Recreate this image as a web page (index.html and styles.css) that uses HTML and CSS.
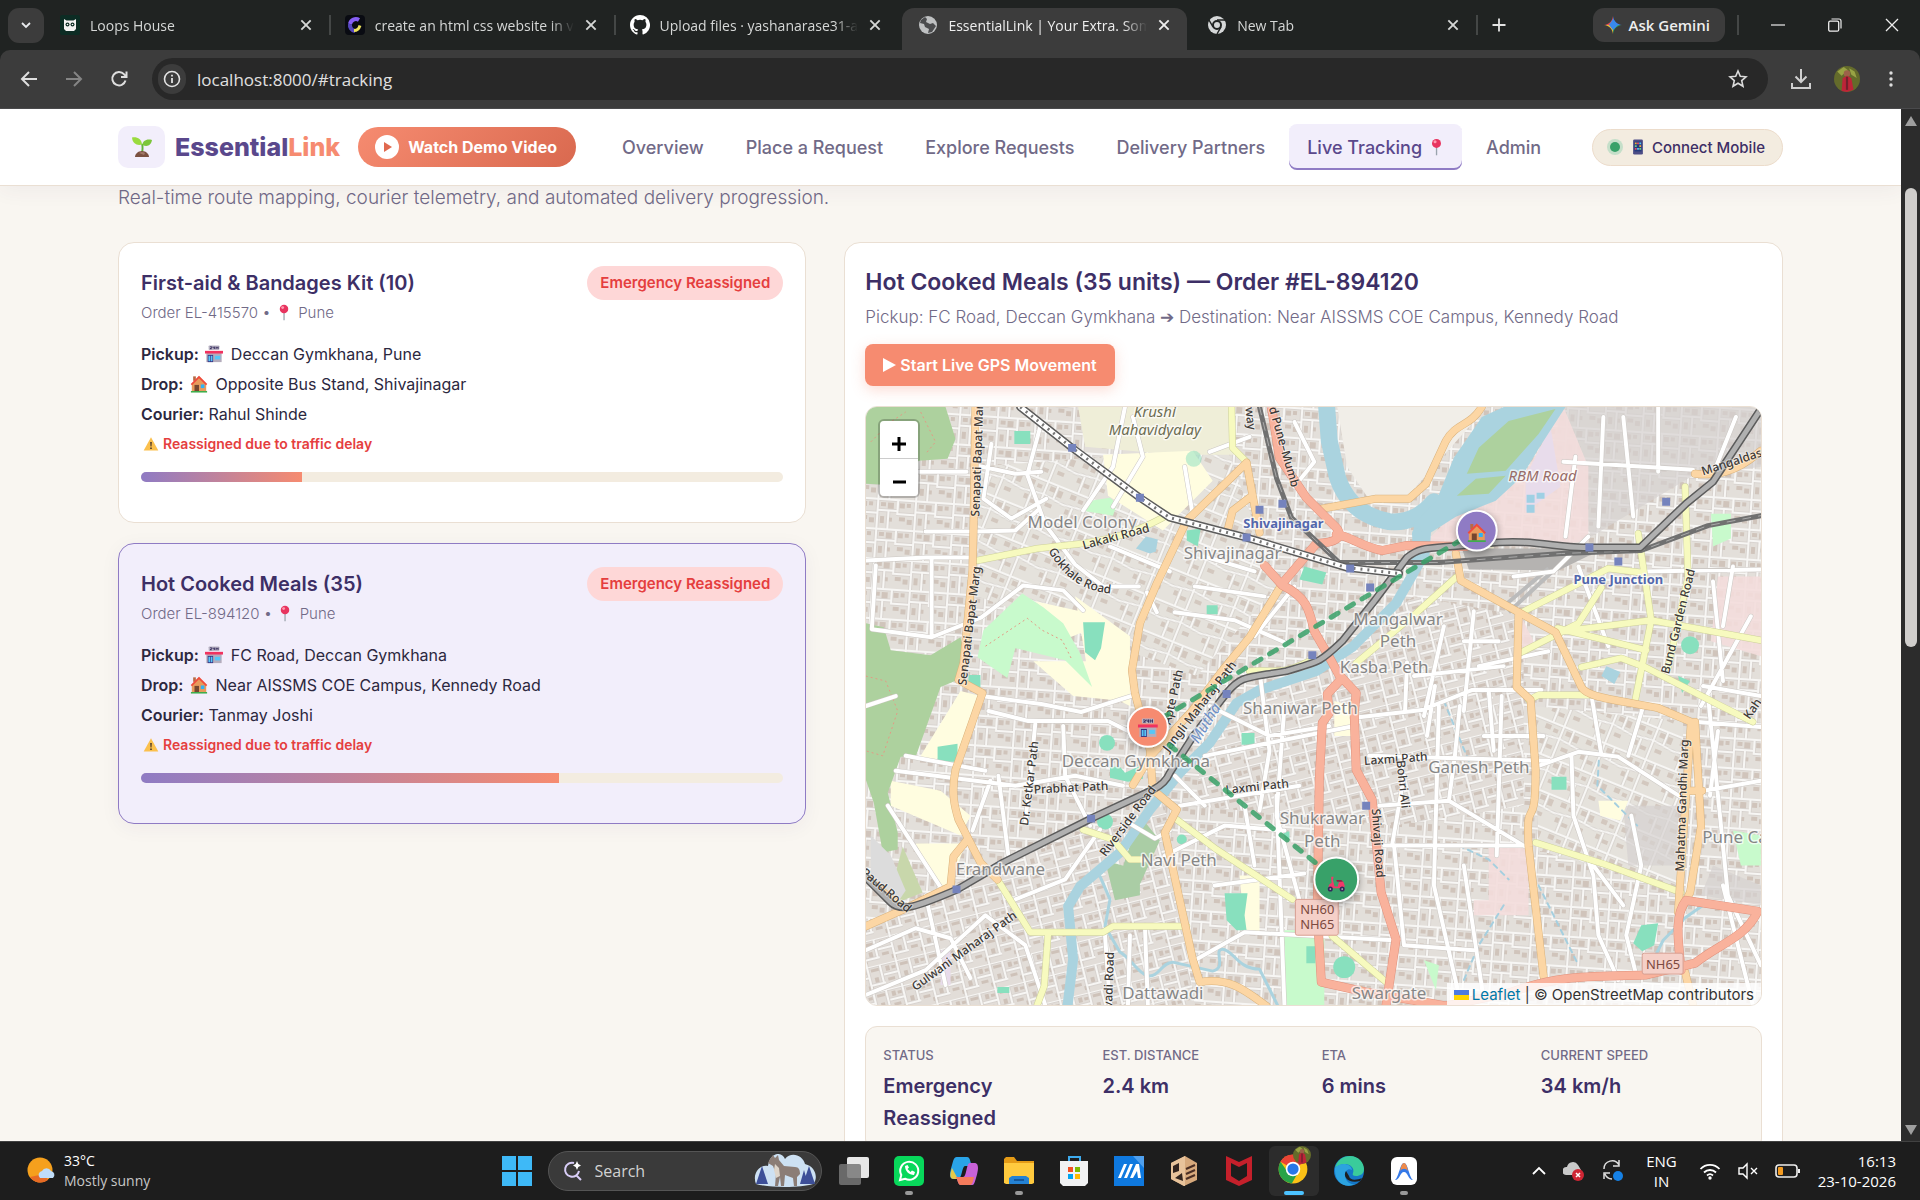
FILE: index.html
```html
<!DOCTYPE html>
<html lang="en">
<head>
<meta charset="utf-8">
<meta name="viewport" content="width=device-width, initial-scale=1">
<title>EssentialLink | Your Extra. Someone's Essential.</title>
<link rel="stylesheet" href="styles.css">
</head>
<body>
<svg class="sprite" aria-hidden="true">
  <symbol id="i-x" viewBox="0 0 12 12"><path d="M2 2l8 8M10 2l-8 8" stroke="currentColor" stroke-width="1.6" fill="none"/></symbol>
  <symbol id="i-pin" viewBox="0 0 16 20"><path d="M7.3 9h1.5v10.2h-1.5z" fill="#9aa3ad"/><circle cx="8" cy="6" r="5" fill="#e8345f"/><circle cx="6.4" cy="4.2" r="1.7" fill="#ff9bb0"/></symbol>
  <symbol id="i-store" viewBox="0 0 20 20"><rect x="4" y="0.5" width="12" height="5" rx="1" fill="#b9b4c4"/><path d="M5.500 2h2v1.200l-2 1h2M9 1.800v1.400h1.600M10.600 1.800v2.600M12.300 1.800v2.600M14.600 1.800v2.600M12.300 3h2.300" stroke="#33295a" stroke-width=".9" fill="none"/><rect x="1.500" y="9" width="17" height="10" fill="#b4acbc"/><path d="M0 6.500h20v3H0z" fill="#f1325f"/><rect x="3" y="11" width="6" height="8" fill="#3a2b7c"/><path d="M3.800 12h1.900v6H3.800zM6.400 12h1.900v6H6.400z" fill="#55c6f7"/><rect x="11" y="12" width="6" height="4" fill="#55c6f7"/></symbol>
  <symbol id="i-house" viewBox="0 0 20 20"><path d="M3.500 1.500h3v5h-3z" fill="#b96a45"/><path d="M10 1.500L2 10v8h16v-8z" fill="#e89a5b"/><path d="M10 .8L.8 10l1.400 1.400L10 3.700l7.800 7.700 1.400-1.400z" fill="#ef4b3c"/><path d="M5 11h5v7H5z" fill="#75462f"/><path d="M12 10.500h4v4h-4z" fill="#30b2f4"/><path d="M1 17.800h18v1.700H1z" fill="#3fae4c"/></symbol>
  <symbol id="i-warn" viewBox="0 0 16 16"><path d="M8 1.200L15.300 14.500H.7z" fill="#fbc04d"/><path d="M7.200 6h1.600l-.3 4.500h-1zM7.200 11.500h1.600V13H7.200z" fill="#4a3527"/></symbol>
  <symbol id="i-sprout" viewBox="0 0 24 24"><path d="M11 18c.8-4 .7-6 .2-9l2-.2c.5 3.600.4 6-.1 9.200z" fill="#62b33c"/><path d="M12 9.500C7 11 2.500 8.500 2 2.500 7 1.500 11.500 4 12 9.500z" fill="#9adb3e"/><path d="M12.500 10c0-4 4-6.500 9.500-5-.8 5-4.500 7.500-9.500 5z" fill="#7cc63a"/><path d="M5 22c0-3 3-6 7-6s7 3 7 6z" fill="#7b5141"/><path d="M9 18c2-1.500 4-1.500 6 0l-1 2z" fill="#a27968"/></symbol>
  <symbol id="i-phone" viewBox="0 0 12 18"><rect x=".5" y=".5" width="11" height="17" rx="1.500" fill="#4c4d86"/><path d="M2 3h8v11H2z" fill="#263b7d"/><path d="M2.500 4h2v2h-2zM7.500 7h2v2h-2z" fill="#f4ad3d"/><path d="M5 4h2v2H5zM2.500 10h2v2h-2z" fill="#e84b66"/><path d="M7.500 4h2v2h-2zM5 10h2v2H5z" fill="#5bc5f2"/><path d="M2.500 7h2v2h-2zM7.500 10h2v2h-2z" fill="#6cd280"/></symbol>
  <symbol id="i-scooter" viewBox="0 0 24 20"><path d="M6 1.500h3L8 5l2 8h4c0-5 2-7 6-6l2 5-1 3H6l-3-1c0-3 1-4 3.500-5z" fill="#f0386a"/><path d="M12 5.500h6l2 2h-7z" fill="#8e2445"/><circle cx="5" cy="16" r="3" fill="#33295a"/><circle cx="19" cy="16" r="3" fill="#33295a"/><circle cx="5" cy="16" r="1" fill="#ccc"/><circle cx="19" cy="16" r="1" fill="#ccc"/></symbol>
  <symbol id="i-person" viewBox="0 0 24 24"><circle cx="12" cy="12" r="12" fill="#646b2b"/><path d="M3 5l6-4 4 3-6 5zM14 2l5 3 2 6-5-3z" fill="#98a344"/><circle cx="12" cy="7" r="3" fill="#9b6249"/><path d="M7 23l1-12 4-2 4 2 2 11-6 2z" fill="#bd2438"/><path d="M11 10h2v12h-2z" fill="#74202d"/></symbol>
  <symbol id="i-chrome" viewBox="0 0 24 24"><circle cx="12" cy="12" r="11.500" fill="#fbc116"/><path d="M12 12L2 6.200A11.500 11.500 0 0 1 22 6.200z" fill="#ea4335"/><path d="M12 .5A11.500 11.500 0 0 1 22 6.500H12z" fill="#ea4335"/><path d="M2 6.200A11.500 11.500 0 0 0 11 23.500l5-8.500-8.500-1z" fill="#28a347"/><circle cx="12" cy="12" r="5.800" fill="#fff"/><circle cx="12" cy="12" r="4.500" fill="#2877e8"/></symbol>
</svg>

<header class="browser">
  <div class="tabstrip">
    <button class="tab-search" aria-label="Search tabs"><svg width="12" height="12" viewBox="0 0 12 12"><path d="M2 4l4 4 4-4" stroke="#e8eaed" stroke-width="1.800" fill="none"/></svg></button>
    <nav class="tabs" aria-label="Tabs">
      <div class="tab"><svg width="20" height="20" viewBox="0 0 20 20"><rect width="20" height="20" rx="2" fill="#0c2c24"/><path d="M4 4l2.500 1.500h7L16 4v10l-2 2H6l-2-2z" fill="#f2f2f2"/><circle cx="7.500" cy="9.500" r="2" fill="#0c2c24"/><circle cx="12.500" cy="9.500" r="2" fill="#0c2c24"/><circle cx="7.500" cy="9.500" r=".8" fill="#fff"/><circle cx="12.500" cy="9.500" r=".8" fill="#fff"/></svg><span class="tab-title">Loops House</span><button aria-label="Close tab"><svg width="14" height="14"><use href="#i-x"/></svg></button></div>
      <div class="tab divided"><svg width="20" height="20" viewBox="0 0 20 20"><rect width="20" height="20" rx="4" fill="#090b12"/><path d="M14 5A6 6 0 0 0 5 9" stroke="#865ef5" stroke-width="4" fill="none"/><path d="M5 9a6 6 0 0 0 5 7" stroke="#5548bd" stroke-width="4" fill="none"/><path d="M9 15.500c4 0 5-2 6-5" stroke="#ede35c" stroke-width="3" fill="none"/></svg><span class="tab-title">create an html css website in v</span><button aria-label="Close tab"><svg width="14" height="14"><use href="#i-x"/></svg></button></div>
      <div class="tab divided"><svg width="20" height="20" viewBox="0 0 16 16"><path fill="#fff" d="M8 0C3.580 0 0 3.580 0 8c0 3.540 2.290 6.530 5.470 7.590.4.070.55-.17.55-.38 0-.19-.01-.82-.01-1.490-2.010.37-2.530-.49-2.690-.94-.09-.23-.48-.94-.82-1.130-.28-.15-.68-.52-.01-.53.630-.01 1.080.58 1.230.82.720 1.210 1.870.87 2.330.66.070-.52.280-.87.510-1.070-1.780-.2-3.640-.89-3.640-3.950 0-.87.310-1.590.82-2.150-.08-.2-.36-1.020.08-2.120 0 0 .67-.21 2.200.82a7.600 7.600 0 0 1 4 0c1.530-1.040 2.200-.82 2.200-.82.440 1.100.16 1.920.08 2.120.51.560.82 1.270.82 2.150 0 3.070-1.870 3.750-3.650 3.950.29.250.54.730.54 1.480 0 1.070-.01 1.930-.01 2.200 0 .21.150.46.550.38A8 8 0 0 0 8 0z"/></svg><span class="tab-title">Upload files · yashanarase31-a</span><button aria-label="Close tab"><svg width="14" height="14"><use href="#i-x"/></svg></button></div>
      <div class="tab active"><svg width="20" height="20" viewBox="0 0 20 20"><circle cx="10" cy="10" r="9" fill="#bfc1c2"/><path d="M3 5l4-3 2 2-1 3 4 2 3-1 3 3-4 6-4 1 1-4-4-2-1-3-4-1z" fill="#4b4c4e"/></svg><span class="tab-title">EssentialLink | Your Extra. Som</span><button aria-label="Close tab"><svg width="14" height="14"><use href="#i-x"/></svg></button></div>
      <div class="tab"><svg width="20" height="20" viewBox="0 0 20 20"><circle cx="10" cy="10" r="9" fill="#d5d7d8"/><circle cx="10" cy="10" r="4" fill="#d5d7d8" stroke="#202322" stroke-width="2"/><path d="M10 5h8M6 12L2 5M14 12l-4 7" stroke="#202322" stroke-width="1.500"/></svg><span class="tab-title">New Tab</span><button aria-label="Close tab"><svg width="14" height="14"><use href="#i-x"/></svg></button></div>
    </nav>
    <button class="new-tab" aria-label="New tab"><svg width="16" height="16" viewBox="0 0 16 16"><path d="M8 1.500v13M1.500 8h13" stroke="#e3e3e3" stroke-width="1.800"/></svg></button>
    <button class="gemini"><svg width="18" height="18" viewBox="0 0 18 18"><path d="M9 0c.5 5 4 8.500 9 9H9z" fill="#447df2"/><path d="M9 0C8.500 5 5 8.500 0 9h9z" fill="#eb4a53"/><path d="M0 9c5 .5 8.500 4 9 9V9z" fill="#eebc35"/><path d="M9 18c.5-5 4-8.500 9-9H9z" fill="#2da567"/><path d="M9 3l5 6-5 5-4-5z" fill="#3889ec"/></svg>Ask Gemini</button>
    <div class="window-controls">
      <button aria-label="Minimize"><svg width="14" height="14" viewBox="0 0 14 14"><path d="M0 7h14" stroke="#ddd" stroke-width="1.300"/></svg></button>
      <button aria-label="Restore"><svg width="14" height="14" viewBox="0 0 14 14"><rect x=".7" y="3.200" width="10" height="10" rx="1.500" fill="none" stroke="#eee" stroke-width="1.300"/><path d="M3.500 1h7.500a2 2 0 0 1 2 2v7.500" fill="none" stroke="#eee" stroke-width="1.200"/></svg></button>
      <button aria-label="Close window"><svg width="14" height="14" viewBox="0 0 14 14"><path d="M1 1l12 12M13 1L1 13" stroke="#eee" stroke-width="1.300"/></svg></button>
    </div>
  </div>
  <div class="toolbar">
    <button aria-label="Back"><svg width="18" height="18" viewBox="0 0 18 18"><path d="M17 9H2.500M9 2L2 9l7 7" stroke="#dedede" stroke-width="2" fill="none"/></svg></button>
    <button aria-label="Forward"><svg width="18" height="18" viewBox="0 0 18 18"><path d="M1 9h14.500M9 2l7 7-7 7" stroke="#858585" stroke-width="2" fill="none"/></svg></button>
    <button aria-label="Reload"><svg width="18" height="18" viewBox="0 0 18 18"><path d="M15.500 10.500A6.700 6.700 0 1 1 14 4.200L16 6" stroke="#dedede" stroke-width="2" fill="none"/><path d="M16.500 1.500V7H11" stroke="#dedede" stroke-width="2" fill="none"/></svg></button>
    <div class="omnibox">
      <button class="site-info" aria-label="Site information"><svg width="18" height="18" viewBox="0 0 18 18"><circle cx="9" cy="9" r="7.500" stroke="#e3e3e3" stroke-width="1.600" fill="none"/><path d="M9 8v5M9 4.800v1.800" stroke="#e3e3e3" stroke-width="1.800"/></svg></button>
      <input type="text" aria-label="Address" value="localhost:8000/#tracking">
      <button aria-label="Bookmark"><svg width="20" height="20" viewBox="0 0 20 20"><path d="M10 2l2.300 5.300 5.700.5-4.300 3.800 1.300 5.700-5-3-5 3 1.300-5.700L2 7.800l5.700-.5z" stroke="#dcdcdc" stroke-width="1.600" fill="none"/></svg></button>
    </div>
    <div class="toolbar-actions">
      <button aria-label="Downloads"><svg width="22" height="22" viewBox="0 0 22 22"><path d="M11 1v13M5.500 8.500L11 14l5.500-5.500M2 15v5h18v-5" stroke="#d0d0d0" stroke-width="2" fill="none"/></svg></button>
      <button aria-label="Profile"><svg width="26" height="26"><use href="#i-person"/></svg></button>
      <button aria-label="Menu"><svg width="18" height="18" viewBox="0 0 18 18" fill="#dedede"><circle cx="9" cy="3" r="1.700"/><circle cx="9" cy="9" r="1.700"/><circle cx="9" cy="15" r="1.700"/></svg></button>
    </div>
  </div>
</header>

<div class="viewport">
  <div class="page">
    <div class="site-header">
      <a class="brand" href="#home"><span class="brand-icon"><svg width="24" height="24"><use href="#i-sprout"/></svg></span><span class="wordmark">Essential<span>Link</span></span></a>
      <button class="demo"><svg width="24" height="24" viewBox="0 0 24 24"><circle cx="12" cy="12" r="12" fill="#fff"/><path d="M9 7l8 5-8 5z" fill="#e0694f"/></svg>Watch Demo Video</button>
      <nav class="site-nav" aria-label="Main">
        <a href="#overview">Overview</a><a href="#request">Place a Request</a><a href="#explore">Explore Requests</a><a href="#partners">Delivery Partners</a><a class="current" href="#tracking">Live Tracking <svg width="15" height="18"><use href="#i-pin"/></svg></a><a href="#admin">Admin</a>
      </nav>
      <button class="connect"><i></i><svg width="12" height="16"><use href="#i-phone"/></svg>Connect Mobile</button>
    </div>

    <main class="content">
      <p class="lead">Real-time route mapping, courier telemetry, and automated delivery progression.</p>
      <div class="columns">
        <section class="orders" aria-label="Orders">
          <article class="order">
            <div class="order-head"><div><h3>First-aid &amp; Bandages Kit (10)</h3><p class="meta">Order EL-415570 • <svg width="14" height="17"><use href="#i-pin"/></svg> Pune</p></div><span class="badge">Emergency Reassigned</span></div>
            <ul class="details">
              <li><b>Pickup:</b> <svg width="18" height="18"><use href="#i-store"/></svg> Deccan Gymkhana, Pune</li>
              <li><b>Drop:</b> <svg width="18" height="18"><use href="#i-house"/></svg> Opposite Bus Stand, Shivajinagar</li>
              <li><b>Courier:</b> Rahul Shinde</li>
              <li class="warning"><svg width="16" height="16"><use href="#i-warn"/></svg>Reassigned due to traffic delay</li>
            </ul>
            <div class="progress"><div style="width:25%"></div></div>
          </article>
          <article class="order selected">
            <div class="order-head"><div><h3>Hot Cooked Meals (35)</h3><p class="meta">Order EL-894120 • <svg width="14" height="17"><use href="#i-pin"/></svg> Pune</p></div><span class="badge">Emergency Reassigned</span></div>
            <ul class="details">
              <li><b>Pickup:</b> <svg width="18" height="18"><use href="#i-store"/></svg> FC Road, Deccan Gymkhana</li>
              <li><b>Drop:</b> <svg width="18" height="18"><use href="#i-house"/></svg> Near AISSMS COE Campus, Kennedy Road</li>
              <li><b>Courier:</b> Tanmay Joshi</li>
              <li class="warning"><svg width="16" height="16"><use href="#i-warn"/></svg>Reassigned due to traffic delay</li>
            </ul>
            <div class="progress"><div style="width:65%"></div></div>
          </article>
        </section>

        <section class="tracker" aria-label="Live order tracking">
          <h2>Hot Cooked Meals (35 units) — Order #EL-894120</h2>
          <p class="route">Pickup: FC Road, Deccan Gymkhana ➔ Destination: Near AISSMS COE Campus, Kennedy Road</p>
          <button class="start"><svg width="13" height="14" viewBox="0 0 13 14"><path d="M0 0l13 7-13 7z" fill="#fff"/></svg>Start Live GPS Movement</button>

          <div class="map">
            <svg class="tiles" viewBox="0 0 898 600" preserveAspectRatio="xMidYMid slice" role="img" aria-label="Map of Pune">
              <defs>
                <pattern id="p-a" width="38" height="30" patternUnits="userSpaceOnUse" patternTransform="rotate(4)"><rect width="38" height="30" fill="#e3dfda"/><path d="M3 4h5v5H3zM10 4h4v4h-4zM22 4h5v4h-5zM29 4h6v6h-6zM3 18h6v4H3zM11 20h5v5h-5zM22 18h4v7h-4zM29 19h5v4h-5z" fill="#d0c4bb"/><path d="M0 1h38M0 15h20M18 12h20M19 0v30M1 0v15M30 12v18" class="lane-case"/><path d="M0 1h38M0 15h20M18 12h20M19 0v30M1 0v15M30 12v18" class="lane"/></pattern>
                <pattern id="p-b" width="30" height="26" patternUnits="userSpaceOnUse" patternTransform="rotate(-14)"><rect width="30" height="26" fill="#e2ddd8"/><path d="M3 3h4v5H3zM9 4h4v3H9zM18 3h8v3h-8zM3 15h7v3H3zM20 12h4v5h-4zM12 19h5v4h-5z" fill="#cec2b9"/><path d="M0 0h30M0 11h16M15 0v26M15 19h15M28 0v19" class="lane-case"/><path d="M0 0h30M0 11h16M15 0v26M15 19h15M28 0v19" class="lane"/></pattern>
                <pattern id="p-c" width="44" height="34" patternUnits="userSpaceOnUse" patternTransform="rotate(22)"><rect width="44" height="34" fill="#e5e2dc"/><path d="M4 4h6v5H4zM13 6h5v4h-5zM26 4h6v5h-6zM35 5h5v7h-5zM4 20h4v5H4zM12 23h6v4h-6zM27 21h7v4h-7z" fill="#d3c8bf"/><path d="M0 1h44M0 17l22-3 22 3M22 0v34M10 17v17M33 1v14" class="lane-case"/><path d="M0 1h44M0 17l22-3 22 3M22 0v34M10 17v17M33 1v14" class="lane"/></pattern>
                <g id="minor">
                  <path d="M23 65h78M112 59l38 8 26-2M126 37l-8 55 28 20 35-20M176 16l-14 52 18 50 30 40 28 22h36M60 125h50l40-1 22-20M0 154l60-3h48M66 153v78l-60-8 4-64M66 231l50-20 42-32 40 5 20 20M218 104l30-44 12-60M268 10l10 40-30 50M245 140l60 25M310 206l60 8 50 22M292 206l-10-20M0 300l30-10M116 290l60 8 40 8 50-16M123 305l40 10h80l40 20M30 365l120 15 60-10 48 10M170 318l-10 100M198 320l2 50 25 50M133 370l10 80M125 375l-18 50M40 350l80 15M150 494l50-20 35-50M22 400l55 85M60 490l20 90M0 545l50-22 35 10 20 40M0 590l60-25 60-55 40 30 20 60M240 530l5 70M265 530l-2 70M280 520l3 80M300 450l60-30 60 5M265 418l25 15 15-8M310 370l30 30M315 400l120-20M340 350l150-30M345 300l60 30 60-10M395 265l10 80-10 60M420 300l-8 110 30 110M380 400l10 60M350 480l90-12M330 555l50-28 150 8M412 390l8 210M530 440l10 100 70 5"/>
                  <path d="M488 312l70-8 50-20h70M543 256l-2 50M563 330l8-50M596 300l-5 50-6 45M575 300l-5 180 25 110M520 440h145M515 400l70-5 80 48M505 350l180 5M540 370l-12 70M600 460l20 135M638 290l-5 160M615 260l70-15M625 285l5 60M675 360l40-14 40 5 70 45M708 350l2 60 20 60 5 60 20 45M768 410l10 50-15 70 10 40M730 460l30 40M845 290l10 100 10 100 33 70M835 316l63 5M841 385l57-10M860 480l30 120M840 280l58 10M780 165l118-2M650 170l40-5 35-35M740 10l-5 110M700 55l130 8M760 10l10 100M795 0v65M853 60l20-50M712 50l-10 80M600 235l35 0M580 220l-20 90M610 205l-10 100M640 260l-90 10M620 330h60M855 325l-8 65M728 289l10 60M780 300l-15 50M715 160l30 80M850 175l10 100M870 160l-10 60M888 210l-50 90M345 45l40-15M320 60l10 60M430 15l20 40-20 25M340 150l50 15M330 180l70 10M430 180l-40 50"/>
                </g>
                <g id="trunk"><path d="M407 0l8 51 27 40 30 30c8 10 0 15-20 16l-34 40M472 128c15 2 25 12 46 16l24-5 60 1M400 159l18 20c25 12 27 25 32 46l15 26 12 22-14 15 2 19-7 10-3 57-2 133 4 70 45 10 80 14 66-14c50-18 80-15 134-17l50-12c25-20 50-25 63-52l-72-11c-12 15-8 40-5 70M477 271l15 16-2 20 2 57 16 30 9 93 15 47-10 66"/></g>
                <g id="secondary"><path d="M110 0l-2 124-1 40-9 93-5 17 24 13-27 77c-5 25 0 40 3 50l22 43 17 17M102 434l-14 17-3 30-47 23L0 521M0 472l38 32M382 56l-60 58-30 63-17 40-8 47 3 23 15 57 3 40 24 20-12 23 28 127 7 23c30-5 45 8 67 24M382 56l13 70M385 91l-17 13-5 20M418 177l-33 54-27 33-30 40-43 47-17 28M618 0c-12 20-25 15-36 34l-20 43-17 15h-33l-54 10M592 147l5 27 58 32 37 20 26 55c5 10 30 12 77 21l33 14-13 191M655 206l-2 75 14 13 5 70c0 70-10 20-7 77l15 130M832 316l6 105-11 66-10 20M832 67c20 2 40 0 66-23M822 567l8 33M822 385h17"/></g>
                <g id="tertiary"><path d="M112 154l60-12 46-5c30-5 50-10 80-26M367 0l1 41 14 14M132 474l33 53h73l10-6h74M183 527l-4 54-7 19M312 414l40 30 76 50M468 531l54 46M218 424l30 10 17 20h13M672 437l70 22 76 28M665 294l10-5h53M658 206l87-44 33 4M775 127l13 87-16 80M692 226l96-12 110 20M738 181l-23 36-57 29M694 222l89 22M718 261l40-9 24 9 80 41 28 14M822 80l3 91-20 90M492 257l60-50 40-36M385 265c25-2 30 5 60-10"/></g>
                <path id="metro" d="M0 472l25 25c10 10 25 5 67-13l46-27 90-45 60-28c10-5 15-12 17-17l23-36 34-44c15-18 20-15 60-22 35-10 35-10 56-30l32-40 33-44c15-12 20-8 77-14 50-5 70 4 100 4h57l46-44 27-22 50-76"/>
                <path id="metro-w" d="M155 0l52 41 68 50 30 20 77 20 100 30 53 6"/>
                <path id="rail" d="M395 0l17 71 15 40 48 45h100l123-9 80-3 67-25 53-10"/>
              </defs>
              <rect width="898" height="600" fill="url(#p-a)"/>
              <path d="M112 60l250-20 50 140-80 90-110-40-110-40z" fill="url(#p-c)"/>
              <path d="M98 260l190 10 20 100-180 90-38-60z" fill="url(#p-a)"/>
              <path d="M60 490l150-60 90-30 30 200H0v-80z" fill="url(#p-b)"/>
              <path d="M340 330l130-80 80-60 110 20v190l-130 20-200-20z" fill="url(#p-b)"/>
              <path d="M670 300l150 15v170l-145-40z" fill="url(#p-c)"/>
              <path d="M700 0h198v60l-70 10-100 60-40-90zM760 400h55v60h-50zM850 460l48 20v20l-60-10z" fill="#d5d2d0" fill-opacity=".7"/>
              <path d="M473 0h150l-80 90-40 0-20-30z" fill="#f1eee8"/>
              <path d="M213 0h152l5 48-60 0-90-8z" fill="#efeed8"/>
              <path d="M238 48l90-4 20 30-50 50-55-35zM170 195l45 10 10 18-20 8zM210 190l55 40v70l-40-20zM168 255h90v40l-50-5zM95 285l20 5-18 60-45 5zM25 375l50 10 30 25-10 20-70-30zM50 438h50l-20 55zM375 470h20v60l-15-5zM735 395h30l-8 20-20-5zM470 295l20 5v30h-20zM600 120h30v30h-30z" fill="#fffde0"/>
              <path d="M560 137l35-35 35-8 30-26 40-68 25 60v75l-60 5zM625 440h40v70h-55v-15h15zM855 170h43v80l-50-15zM655 205l15 30-10 20z" fill="#f3dddb" fill-opacity=".9"/>
              <path d="M662 70l25-50 10 60-35 25zM75 545h10v35h-10z" fill="#e8dceb"/>
              <path d="M0 0h80l10 32-8 20-29 2-18 25-35-2zM0 217l18 4 7 23 40 5 30-18 5 23-8 20-17 7-25 70-15 0-13 36 10 40v17l-15 3-9-50-8-23z" fill="#add19e"/>
              <path d="M37 441l20 46-22 9-6-25z" fill="#c8d7ab"/><path d="M5 430l20 20 15 35-10 15-25-22z" fill="#dcdcdc"/>
              <path d="M112 251l6-27 39-37 21 14 20 16 17 30 12 34-27-27-50-12-8 30zM218 104l7-10 20-3 7 6-4 12zM420 525h40v75h-40zM560 555l15 5-3 25zM870 425l28 5v30h-20zM848 107l20 0v25l-18 8z" fill="#c8facc"/>
              <path d="M275 410l20 25-25 55-15-20zM240 455l35 10v25l-25 5z" fill="#aacda5"/>
              <g class="trails"><path d="M5 35l20-20 15-10M55 5l15 30-10 12M0 270l20 5 12 30-15 45-17-5M120 240l30-20 12-8 15 12 20 10 10 20"/></g>
              <g class="sport"><path d="M149 24h16v13h-16zM218 216h22l-4 26-6 12-10-8zM72 341l20-3v18H72zM103 269h12v12h-12zM377 327h13v12h-13zM245 361h10l5 6 18-8v14l-15 3-18-4zM360 488h23l-3 22 2 15h-10l-10-10zM442 541h9v17h-9zM688 371h15v13h-15zM778 520l17-2-4 22-12 6-9-8zM322 124l14-2-3 18-11-6zM132 582h12v6h-12zM417 426h8v8h-8zM342 199h11v9h-11zM440 160l22 6-4 12-23-5zM815 270l12 5-8 12z"/><circle cx="242" cy="337" r="8"/><circle cx="240" cy="416" r="8"/><circle cx="317" cy="434" r="5"/><circle cx="480" cy="562" r="11"/><circle cx="827" cy="239" r="9"/><circle cx="329" cy="52" r="8" opacity=".5"/></g>
              <g class="water">
                <path d="M462-5l3 39 8 36c8 25 25 40 52 45 20 2 35-8 45-20" class="river-n"/>
                <path d="M618 10L640 0h62l-24 37-20 33-26 24-40 16-25 16-2 31h-18l3-40 22-22 18-44 22-32z" fill="#aad3df"/>
                <path d="M553 127l2 30-23 40-44 44-36 24-57 19-23 13-27 40-30 30-30 37-30 43-40 34-12 20 5 53-6 50" class="river"/>
                <path d="M235 471l10 23-5 27 15 26c10 5 20 24 30 24s12-14 23-14l40 9c15-3 0-22 10-22s15 20 37 20l20 40M820 514l20-14 30-3M790 555l10-20 20-20" class="stream"/>
                <path d="M285 147l-14-5 10-12 12 3-2 12zM738 270l5-10 14 6-6 12z" class="pond"/>
                <path d="M663 88h8v8h-8zM673 86h8v6h-8zM663 98h8v8h-8z" fill="#9fd0e4"/>
                <path d="M595 440l30 14 20 20M640 500l-25 40-15 35M675 480l20 40 20 40M580 295l25 60M736 345l-2 35 40 40" class="drain"/>
              </g>
              <path d="M603 67l12-26 30-27 47-12-17 25-33 37zM593 89l19-17 30-3-17 18z" fill="#add19e"/>
              <path d="M598 142h142l-45 22-90-1z" fill="#b5b3b1"/><path d="M645 206l45-42M640 200l45-38" stroke="#bbb" stroke-width="4" fill="none"/>
              <use href="#minor" class="minor-case"/><use href="#minor" class="minor"/>
              <use href="#tertiary" class="ter-case"/><use href="#tertiary" class="ter"/>
              <use href="#secondary" class="sec-case"/><use href="#secondary" class="sec"/>
              <use href="#trunk" class="trunk-case"/><use href="#trunk" class="trunk"/>
              <use href="#rail" class="rail"/><use href="#rail" class="rail-dash"/>
              <use href="#metro" class="metro-case"/><use href="#metro" class="metro-fill"/>
              <use href="#metro-w" class="metro-case"/><use href="#metro-w" class="metro-white"/><use href="#metro-w" class="metro-dots"/>
              <path class="stations" d="M203 37h8v8h-8zM271 87h8v8h-8zM391 99h8v8h-8zM414 93h8v8h-8zM378 127h8v8h-8zM482 158h8v8h-8zM444 245h8v8h-8zM502 177h8v8h-8zM799 91h8v8h-8zM722 137h8v8h-8zM751 151h8v8h-8zM358 284h8v8h-8zM222 409h8v8h-8zM87 480h8v8h-8zM498 396h8v8h-8z"/>
              <g class="places">
                <text x="217" y="121">Model Colony</text><text x="368" y="153">Shivajinagar</text><text x="534" y="219">Mangalwar</text><text x="534" y="241">Peth</text><text x="520" y="267">Kasba Peth</text><text x="436" y="308">Shaniwar Peth</text><text x="271" y="361">Deccan Gymkhana</text><text x="615" y="367">Ganesh Peth</text><text x="458" y="418">Shukrawar</text><text x="458" y="441">Peth</text><text x="135" y="470">Erandwane</text><text x="314" y="461">Navi Peth</text><text x="298" y="594">Dattawadi</text><text x="525" y="594">Swargate</text><text x="880" y="437">Pune Cam</text>
              </g>
              <g class="areas"><text x="290" y="10">Krushi</text><text x="290" y="28">Mahavidyalay</text><text x="679" y="74" fill="#986c68">RBM Road</text><text fill="#6b8fc8" transform="translate(345 320) rotate(-58)">Mutha</text></g>
              <g class="stations-t"><text x="419" y="121">Shivajinagar</text><text x="755" y="178">Pune Junction</text></g>
              <g class="roads-t">
                <text transform="translate(116 50) rotate(-88)">Senapati Bapat Marg</text><text transform="translate(108 220) rotate(-83)">Senapati Bapat Marg</text><text transform="translate(252 134) rotate(-15)">Lakaki Road</text>
                <path id="gok" d="M183 144Q205 184 245 187" fill="none"/><text class="start-at"><textPath href="#gok">Gokhale Road</textPath></text>
                <text transform="translate(414 35) rotate(74)">Old Pune–Mumb</text><text transform="translate(382 12) rotate(83)">way</text><text transform="translate(312 292) rotate(-77)">Apte Path</text><text transform="translate(338 303) rotate(-52)">Jangli Maharaj Path</text><text transform="translate(206 386) rotate(-3)">Prabhat Path</text><text transform="translate(168 378) rotate(-83)">Dr. Ketkar Path</text><text transform="translate(393 385) rotate(-6)">Laxmi Path</text><text transform="translate(532 357) rotate(-4)">Laxmi Path</text><text transform="translate(535 379) rotate(84)">Bohri Ali</text><text transform="translate(510 438) rotate(86)">Shivaji Road</text><text transform="translate(266 418) rotate(-53)">Riverside Road</text><text transform="translate(101 549) rotate(-36)">Gulwani Maharaj Path</text><text transform="translate(18 488) rotate(40)">Paud Road</text><text transform="translate(248 575) rotate(-88)">vadi Road</text><text transform="translate(823 400) rotate(-88)">Mahatma Gandhi Marg</text><text transform="translate(819 216) rotate(-76)">Bund Garden Road</text><text transform="translate(870 59) rotate(-18)">Mangaldas</text><text transform="translate(893 305) rotate(-55)">Kah</text>
              </g>
              <g class="shields"><rect x="431" y="494" width="43" height="36" rx="2"/><text x="453" y="509">NH60</text><text x="453" y="524">NH65</text><rect x="779" y="548" width="41" height="21" rx="2"/><text x="800" y="564">NH65</text></g>
              <path class="track" d="M613 124L282 321l190 153"/>
              <g class="markers"><circle cx="283" cy="321" r="20" fill="#f68b70"/><use href="#i-store" x="273" y="312" width="20" height="20"/><circle cx="613" cy="124" r="20" fill="#8f7bc4"/><use href="#i-house" x="603" y="116" width="20" height="20"/><circle cx="472" cy="474" r="22" fill="#38a169"/><use href="#i-scooter" x="461" y="470" width="22" height="17"/></g>
            </svg>
            <div class="zoom"><button aria-label="Zoom in"><svg width="16" height="16" viewBox="0 0 16 16"><path d="M8 1v14M1 8h14" stroke="#000" stroke-width="3"/></svg></button><button aria-label="Zoom out"><svg width="16" height="16" viewBox="0 0 16 16"><path d="M2 8h13" stroke="#000" stroke-width="3"/></svg></button></div>
            <div class="attribution"><svg width="15" height="10" viewBox="0 0 15 10"><path d="M0 0h15v5H0z" fill="#4c7be1"/><path d="M0 5h15v5H0z" fill="#ffd500"/></svg><a href="#leaflet">Leaflet</a> | © OpenStreetMap contributors</div>
          </div>

          <dl class="stats">
            <div><dt>STATUS</dt><dd>Emergency Reassigned</dd></div>
            <div><dt>EST. DISTANCE</dt><dd>2.4 km</dd></div>
            <div><dt>ETA</dt><dd>6 mins</dd></div>
            <div><dt>CURRENT SPEED</dt><dd>34 km/h</dd></div>
          </dl>
        </section>
      </div>
    </main>
  </div>
  <div class="scrollbar" aria-hidden="true"><svg width="12" height="10" viewBox="0 0 12 10"><path d="M6 0l6 10H0z" fill="#9f9f9f"/></svg><div class="rail-track"><div class="thumb"></div></div><svg width="12" height="10" viewBox="0 0 12 10"><path d="M6 10L0 0h12z" fill="#9f9f9f"/></svg></div>
</div>

<footer class="taskbar">
  <div class="weather"><svg width="30" height="28" viewBox="0 0 30 28"><circle cx="13" cy="13" r="12.500" fill="#f5a01d"/><path d="M3 20a12.500 12.500 0 0 0 18 3l-4-6z" fill="#e76b25"/><path d="M13 21a4 4 0 0 1 2-7 5 5 0 0 1 9 0 4 4 0 0 1 2 7z" fill="#bfdcf8"/></svg><div>33°C<span>Mostly sunny</span></div></div>
  <div class="apps">
    <button aria-label="Start"><svg width="30" height="30" viewBox="0 0 30 30"><path d="M0 0h14v14H0zM16 0h14v14H16zM0 16h14v14H0zM16 16h14v14H16z" fill="#3eb9f7"/></svg></button>
    <label class="search"><svg width="22" height="22" viewBox="0 0 22 22"><path d="M12 3a7 7 0 1 0 5 8M14 15l5 5" stroke="#d8cdf7" stroke-width="2" fill="none"/><path d="M15 1l1.300 3L19 5.500 16.300 7 15 10l-1.300-3L11 5.500 13.700 4z" fill="#fff"/></svg><input type="text" placeholder="Search" aria-label="Search"><svg width="62" height="34" viewBox="0 0 62 34"><path d="M2 30C-2 20 5 10 14 12 16-2 28-3 31 5c6-8 18-4 20 5 12 3 13 16 8 20-12 4-44 4-57 0z" fill="#cde1f3"/><path d="M8 12l6 18H2zM55 12l6 18H49zM50 16l4 14h-8z" fill="#3d4f98"/><path d="M16 5l3-4 2 3 3-3 1 5 5 6 11 1c4 0 5 3 5 7l-3 3v9h-3l-1-8-8-3-1 11h-3l-1-9-2 9h-3l1-12-3-8-5-3z" fill="#8b7d76"/><path d="M21 10l4 4 1 8-4 2-2-8z" fill="#ded5ca"/></svg></label>
    <button aria-label="Task view"><svg width="32" height="30" viewBox="0 0 32 30"><rect x="9" y="1" width="22" height="21" rx="2" fill="#e8e8e8"/><rect x="1" y="8" width="22" height="21" rx="2" fill="#777" opacity=".85"/></svg></button>
    <button class="running" aria-label="WhatsApp"><svg width="30" height="30" viewBox="0 0 30 30"><rect width="30" height="30" rx="5" fill="#08d85b"/><path d="M6 24l1.300-5A9 9 0 1 1 11 22.700z" fill="none" stroke="#fff" stroke-width="2"/><path d="M11 10c0 5 4 9 9 9l1-3-3-1.500-1.500 1.500-3-3 1.500-1.500L13.500 9z" fill="#fff"/></svg></button>
    <button aria-label="Copilot"><svg width="30" height="30" viewBox="0 0 30 30"><path d="M9 1h9c4 0 3 8 6 9h-8c-3 0-3 13-7 13H5c-6 0-4-7-2-14s2-8 6-8z" fill="#2aa4e8"/><path d="M3 12l6 11H5c-5 0-4-5-2-11z" fill="#e6c948"/><path d="M21 29h-9c-4 0-3-8-6-8h8c4 0 3-14 7-14h4c6 0 4 8 2 15s-2 7-6 7z" fill="#c862d8"/><path d="M21 29h-9c-4 0-3-8-6-8h8l11 0c-1 5-2 8-4 8z" fill="#f47b5b"/></svg></button>
    <button class="running" aria-label="File Explorer"><svg width="30" height="28" viewBox="0 0 30 28"><path d="M0 2l2-2h8l3 4h17v6H0z" fill="#e59b16"/><path d="M0 6h30v20l-2 1H2l-2-1z" fill="#ffca3e"/><path d="M5 27v-6l3-2h14l3 2v6z" fill="#2482d4"/><path d="M10 22h10v2H10z" fill="#15579b"/></svg></button>
    <button aria-label="Microsoft Store"><svg width="28" height="30" viewBox="0 0 28 30"><path d="M9 6V1h11v5" stroke="#3dabee" stroke-width="2" fill="none"/><path d="M0 5h28v22l-3 3H3l-3-3z" fill="#f1f2f3"/><path d="M8 11h5v5H8z" fill="#f25022"/><path d="M15 11h5v5h-5z" fill="#7fba00"/><path d="M8 18h5v5H8z" fill="#00a4ef"/><path d="M15 18h5v5h-5z" fill="#ffb900"/></svg></button>
    <button aria-label="MyASUS"><svg width="30" height="30" viewBox="0 0 30 30"><path d="M0 0h30v30H0z" fill="#0f79df"/><path d="M19 0h11v12z" fill="#4fa0ee"/><path d="M4 22L10 8h3L7 22zM10 22l6-14h3l-6 14zM22 8h3l2 14h-3l-1-7-4 7h-3z" fill="#fff"/></svg></button>
    <button aria-label="Package manager"><svg width="28" height="30" viewBox="0 0 28 30"><path d="M15 0l12 7v17L14 30 1 23V7z" fill="#d7a97c"/><path d="M15 0v30h-1L1 23V7z" fill="#e8c39b"/><path d="M3 10l6-3v8l-6 2zM5 22l7-5 1 8z" fill="#33251f"/><path d="M16 13l9-4M16 18l9-4M16 23l9-4" stroke="#4a2e24" stroke-width="2"/></svg></button>
    <button aria-label="McAfee"><svg width="28" height="30" viewBox="0 0 28 30"><path d="M1 0l13 6 13-6v24l-13 6L1 24zM6 7v13l8 5 8-5V7l-8 4z" fill="#c5202b" fill-rule="evenodd"/></svg></button>
    <button class="focused" aria-label="Google Chrome"><svg width="34" height="38" viewBox="0 0 34 38"><use href="#i-chrome" x="1" y="8" width="30" height="30"/><use href="#i-person" x="16" y="0" width="18" height="18"/></svg></button>
    <button aria-label="Microsoft Edge"><svg width="30" height="30" viewBox="0 0 30 30"><circle cx="15" cy="15" r="15" fill="#1678c8"/><path d="M1 12C3 4 9 0 16 0c9 0 14 7 14 13 0 5-4 7-8 7-3 0-4-1-3-3 2-5-3-9-8-9-4 0-8 2-10 4z" fill="#3acb9b"/><path d="M1 12c5-6 16-5 17 2-4-2-7 1-7 5 0 5 4 10 10 9-9 5-21-1-20-16z" fill="#2ca3e0"/><path d="M12 15c-4 6 3 13 14 10l2-3c-5 2-12 3-13-2z" fill="#1d1f20"/></svg></button>
    <button class="running" aria-label="Antigravity"><svg width="26" height="28" viewBox="0 0 26 28"><rect width="26" height="28" rx="6" fill="#fff"/><path d="M4 23C8 20 9 6 13 6s5 14 9 17c-5 0-5-8-9-8s-4 8-9 8z" fill="#3479e8"/><path d="M10 10c1-3 2-4 3-4s2 1 3 4l1 4c-2-3-6-3-8 0z" fill="#ef8a49"/></svg></button>
  </div>
  <div class="tray">
    <svg width="14" height="14" viewBox="0 0 14 14"><path d="M1 10l6-6 6 6" stroke="#fff" stroke-width="1.800" fill="none"/></svg>
    <svg width="22" height="22" viewBox="0 0 22 22"><path d="M3 15a4 4 0 0 1 1-8 6 6 0 0 1 11-2l3 5v5z" fill="#c9c9c9"/><circle cx="15" cy="15" r="6" fill="#cf2634"/><path d="M13 13l4 4M17 13l-4 4" stroke="#fff" stroke-width="1.500"/></svg>
    <svg width="22" height="22" viewBox="0 0 22 22"><path d="M2 9a8 8 0 0 1 15-4M17 0v6h-6M2 19v-6h6M3 14a8 8 0 0 0 7 5" stroke="#ddd" stroke-width="1.500" fill="none"/><circle cx="16" cy="16" r="5" fill="#1681e5"/></svg>
    <div class="lang">ENG<span>IN</span></div>
    <svg width="22" height="18" viewBox="0 0 22 18"><path d="M1.500 7a13 13 0 0 1 19 0M5 10.500a8.500 8.500 0 0 1 12 0M8 13.500a4.500 4.500 0 0 1 6 0" stroke="#fff" stroke-width="1.800" fill="none"/><circle cx="11" cy="16" r="1.700" fill="#fff"/></svg>
    <svg width="20" height="18" viewBox="0 0 20 18"><path d="M1 6h4l4-4v14l-4-4H1zM13 6l6 6M19 6l-6 6" stroke="#fff" stroke-width="1.400" fill="none"/></svg>
    <svg width="26" height="16" viewBox="0 0 26 16"><rect x="1" y="2" width="21" height="12" rx="3" stroke="#eee" stroke-width="1.600" fill="none"/><rect x="3" y="4" width="5" height="8" rx="1" fill="#f49c22"/><path d="M24 6v4" stroke="#eee" stroke-width="2"/></svg>
    <div class="clock">16:13<span>23-10-2026</span></div>
  </div>
</footer>
</body>
</html>
```

FILE: styles.css
```css
:root {
  --ink: #3d2f66;
  --muted: #716a87;
  --line: #eadfd3;
  --coral: #f68b70;
  --violet: #8f7bc4;
  --lilac: #f2eefb;
  --cream: #f9f6f1;
  --sand: #f3ece0;
  --red: #e53e3e;
}
* { box-sizing: border-box; }
body {
  margin: 0;
  height: 100vh;
  display: flex;
  flex-direction: column;
  overflow: hidden;
  font-family: Inter, "Open Sans", sans-serif;
  color: #2c2840;
}
h2, h3, p, ul, dl, dd { margin: 0; padding: 0; }
button { border: 0; padding: 0; background: none; font: inherit; color: inherit; }
a { color: inherit; text-decoration: none; }
svg { flex: none; }
.sprite { position: absolute; width: 0; height: 0; }

/* Browser window */
.browser, .taskbar { font-family: "Open Sans", "Noto Sans", sans-serif; }
.browser { background: #202322; color: #d5d7d6; flex: none; }
.tabstrip { height: 50px; display: flex; align-items: center; padding-left: 8px; }
.tab-search { width: 36px; height: 35px; border-radius: 11px; background: #3c3c3c; }
.tabs { display: flex; flex: 0 1 1432px; min-width: 0; align-self: stretch; padding-top: 8px; }
.tab { flex: 1 1 0; min-width: 0; display: flex; align-items: center; gap: 10px; padding: 0 16px 8px; height: 42px; font-size: 14px; position: relative; }
.tab button { width: 14px; height: 14px; display: flex; }
.tab-title { flex: 1; white-space: nowrap; overflow: hidden; mask-image: linear-gradient(90deg, #000 88%, transparent); }
.tab.divided::before { content: ""; position: absolute; left: 0; top: 7px; width: 2px; height: 20px; background: #444746; }
.tab.active { background: #3c3c3c; border-radius: 12px 12px 0 0; color: #eee; margin: 0 4px; }
.new-tab { width: 44px; height: 20px; border-left: 2px solid #444746; display: flex; justify-content: center; align-items: center; }
.gemini { margin-left: auto; height: 34px; padding: 0 15px 0 11px; border-radius: 11px; background: #3c3c3c; color: #eee; font-size: 15px; font-weight: 600; display: flex; align-items: center; gap: 7px; }
.window-controls { display: flex; margin-left: 12px; border-left: 2px solid #444746; }
.window-controls button { width: 57px; height: 20px; display: flex; justify-content: center; align-items: center; }
.window-controls button:first-child { margin-left: 10px; }
.toolbar { height: 59px; background: #3c3c3c; border-radius: 10px 10px 0 0; display: flex; align-items: center; gap: 27px; padding: 0 20px; border-bottom: 1px solid #4a4a4c; }
.toolbar button { display: flex; }
.toolbar-actions { display: flex; align-items: center; gap: 22px; }
.omnibox { flex: 1; height: 42px; border-radius: 21px; background: #282828; display: flex; align-items: center; gap: 11px; padding: 0 20px 0 6px; margin: 0 -5px 0 -3px; }
.omnibox input { flex: 1; border: 0; padding: 0; background: none; color: #e0e0e0; font: 17px "Open Sans", sans-serif; outline: 0; }
.site-info { width: 28px; height: 30px; border-radius: 15px; background: #3c3c3c; align-items: center; justify-content: center; }

/* Page */
.viewport { flex: 1; min-height: 0; display: flex; background: #2c2c2c; }
.page { flex: 1; min-width: 0; background: var(--cream); overflow: hidden; }
.scrollbar { width: 19px; display: flex; flex-direction: column; align-items: center; padding: 7px 0 6px; }
.rail-track { flex: 1; padding-top: 62px; }
.thumb { width: 12px; height: 49%; border-radius: 6px; background: #d0cecc; }
.site-header { position: relative; height: 77px; background: #fff; border-bottom: 1px solid var(--line); box-shadow: 0 4px 20px rgba(61, 47, 102, .06); padding: 0 118px; display: flex; align-items: center; white-space: nowrap; }
.brand { display: flex; align-items: center; gap: 10px; }
.brand-icon { width: 47px; height: 42px; border-radius: 10px; background: var(--lilac); display: flex; align-items: center; justify-content: center; }
.wordmark { font-size: 25px; font-weight: 800; color: #5a488c; }
.wordmark span { color: var(--coral); }
.demo { margin-left: 18px; height: 40px; padding: 0 19px 0 17px; border-radius: 20px; background: linear-gradient(135deg, var(--coral), #d9694f); color: #fff; font-size: 16px; font-weight: 700; display: flex; align-items: center; gap: 9px; }
.site-nav { display: flex; align-items: center; margin-left: 28px; gap: 6px; font-size: 18px; font-weight: 500; color: var(--muted); }
.site-nav a { height: 46px; padding: 0 18px; display: flex; align-items: center; gap: 7px; border-radius: 8px; }
.site-nav .current { background: var(--lilac); color: #5a488c; box-shadow: inset 0 -2px var(--violet); }
.connect { margin-left: auto; height: 37px; padding: 0 17px; border-radius: 19px; background: var(--sand); border: 1px solid #ecdccb; color: var(--ink); font-size: 15px; font-weight: 500; display: flex; align-items: center; gap: 8px; }
.connect i { width: 10px; height: 10px; border-radius: 5px; background: #38a169; box-shadow: 0 0 0 3px #c5dfc9; margin-right: 4px; }
.content { padding: 0 118px; }
.lead { font-size: 19px; line-height: 24px; color: var(--muted); font-weight: 300; padding-bottom: 32px; }
.columns { display: grid; grid-template-columns: 11fr 15fr; gap: 38px; align-items: start; }
.orders { display: grid; gap: 20px; }
.order, .tracker { background: #fff; border: 1px solid var(--line); border-radius: 16px; }
.order { padding: 23px 22px 40px; }
.order.selected { background: var(--lilac); border-color: var(--violet); box-shadow: 0 4px 20px rgba(61, 47, 102, .05); }
.order-head { display: flex; justify-content: space-between; align-items: flex-start; }
h3 { font-size: 20px; line-height: 34px; font-weight: 600; color: var(--ink); }
.meta { font-size: 15px; line-height: 25px; color: var(--muted); font-weight: 300; }
.meta svg, .details svg { vertical-align: -3px; margin: 0 3px 0 2px; }
.badge { height: 34px; line-height: 34px; padding: 0 13px; border-radius: 17px; background: #fed7d7; color: var(--red); font-size: 15px; font-weight: 600; }
.details { list-style: none; padding: 14px 0 13px; font-size: 16px; line-height: 30px; }
.details b { font-weight: 600; }
.details .warning { color: var(--red); font-size: 14px; font-weight: 600; display: flex; align-items: center; gap: 1px; }
.progress { height: 10px; border-radius: 5px; overflow: hidden; background: var(--sand); }
.progress div { height: 100%; background: linear-gradient(90deg, var(--violet), var(--coral)); }

.tracker { padding: 19px 20px 20px; }
h2 { font-size: 23px; line-height: 40px; font-weight: 600; color: var(--ink); }
.route { font-size: 17px; line-height: 30px; color: var(--muted); font-weight: 300; white-space: nowrap; }
.start { margin: 12px 0 20px; height: 42px; padding: 0 18px; border-radius: 8px; background: var(--coral); box-shadow: 0 4px 14px rgba(246, 139, 112, .3); color: #fff; font-size: 16px; font-weight: 600; display: flex; align-items: center; gap: 4px; }
.map { position: relative; height: 600px; border: 1px solid var(--line); border-radius: 12px; overflow: hidden; }
.tiles { display: block; width: 100%; height: 100%; }
.zoom { position: absolute; left: 12px; top: 12px; border: 2px solid rgba(0, 0, 0, .22); border-radius: 6px; overflow: hidden; }
.zoom button { width: 38px; height: 37px; background: #fff; display: flex; align-items: center; justify-content: center; padding-top: 8px; }
.zoom button + button { border-top: 1px solid #ccc; height: 38px; }
.attribution { position: absolute; right: 0; bottom: 0; height: 22px; line-height: 23px; padding: 0 7px; background: rgba(255, 255, 255, .82); font-size: 15px; color: #333; }
.attribution a { color: #0078a8; margin-left: 3px; }
.stats { margin-top: 20px; padding: 16px 17px; border: 1px solid var(--line); border-radius: 12px; background: var(--cream); display: grid; grid-template-columns: repeat(4, 1fr); gap: 16px; }
dt { font-size: 13px; line-height: 24px; font-weight: 500; color: var(--muted); }
dd { font-size: 20px; line-height: 32px; padding-top: 3px; font-weight: 600; color: var(--ink); }

/* Map drawing */
.tiles use, .river-n, .river, .stream, .drain { fill: none; stroke-linecap: round; stroke-linejoin: round; }
.tiles .lane-case { stroke: #cfcac6; stroke-width: 3; fill: none; }
.tiles .lane { stroke: #f7f6f4; stroke-width: 2; fill: none; }
.minor-case { stroke: #ccc8c4; stroke-width: 5; }
.minor { stroke: #fff; stroke-width: 4; }
.ter-case { stroke: #cdd09a; stroke-width: 7; }
.ter { stroke: #f7fabf; stroke-width: 6; }
.sec-case { stroke: #d9b27c; stroke-width: 8; }
.sec { stroke: #fcd6a4; stroke-width: 7; }
.trunk-case { stroke: #e0917c; stroke-width: 9; }
.trunk { stroke: #f9b29c; stroke-width: 8; }
.rail { stroke: #707070; stroke-width: 5; }
.tiles .rail-dash { stroke: #aaa; stroke-width: 1; stroke-dasharray: 8 8; }
.metro-case { stroke: #5c5c5c; stroke-width: 8; }
.metro-fill { stroke: #b0b0b0; stroke-width: 5; }
.metro-white { stroke: #fff; stroke-width: 5; }
.tiles .metro-dots { stroke: #777; stroke-width: 3; stroke-dasharray: 2 5; stroke-linecap: butt; }
.river-n { stroke: #aad3df; stroke-width: 17; }
.river { stroke: #aad3df; stroke-width: 10; }
.stream { stroke: #aad3df; stroke-width: 3; }
.drain { stroke: #a5cfdf; stroke-width: 2; stroke-dasharray: 5 5; }
.trails { fill: none; stroke: #e39a85; stroke-width: 1; stroke-dasharray: 2 3; }
.pond { fill: #aad3df; }
.sport { fill: #88e0be; }
.stations { fill: #7583bd; }
.tiles text { font-family: "Noto Sans", sans-serif; text-anchor: middle; paint-order: stroke; stroke: rgba(255, 255, 255, .7); stroke-width: 3px; stroke-linejoin: round; }
.places text { font-size: 17px; fill: #868686; }
.areas text { font-size: 15px; font-style: italic; }
.areas { fill: #6d6d52; }
.stations-t text { font-size: 13px; font-weight: 700; fill: #5367ad; }
.roads-t text { font-size: 12px; font-weight: 500; fill: #3d3a37; stroke: rgba(255, 255, 255, .45); stroke-width: 2px; }
.tiles .start-at { text-anchor: start; }
.shields rect { fill: #f5d0c8; stroke: #d79f92; }
.shields text { font-size: 13px; fill: #7c4a40; stroke: none; }
.track { fill: none; stroke: #38a169; stroke-opacity: .85; stroke-width: 5; stroke-dasharray: 8 10; stroke-linecap: round; }
.markers circle { stroke: #fff; stroke-width: 2; filter: drop-shadow(0 2px 4px rgba(0, 0, 0, .35)); }

/* Taskbar */
.taskbar { height: 59px; flex: none; background: #1d1d1d; border-top: 1px solid #414141; color: #fff; display: grid; grid-template-columns: 1fr auto 1fr; align-items: center; font-size: 14px; line-height: 20px; }
.taskbar span { display: block; }
.weather { display: flex; align-items: center; gap: 7px; padding-left: 27px; }
.weather span { color: #c7c7c7; }
.apps { display: flex; align-items: center; gap: 5px; }
.apps button { position: relative; width: 50px; height: 50px; border-radius: 6px; display: flex; align-items: center; justify-content: center; }
.running::after, .focused::after { content: ""; position: absolute; bottom: 1px; width: 8px; height: 4px; border-radius: 2px; background: #999; }
.apps .focused { background: #2c2c2c; align-items: flex-start; }
.focused::after { width: 20px; background: #4cc2ff; }
.search { width: 274px; height: 40px; margin: 0 2px 0 1px; padding: 0 5px 0 13px; border-radius: 20px; background: #3a3a3a; border: 1px solid #555; display: flex; align-items: center; gap: 11px; }
.search input { flex: 1; min-width: 0; border: 0; padding: 0; background: none; color: #ddd; font: 16px "Open Sans", sans-serif; }
.search input::placeholder { color: #d2d2d2; }
.tray { display: flex; align-items: center; justify-content: flex-end; gap: 17px; padding-right: 24px; text-align: center; font-size: 15px; }
.lang { margin: 0 5px; }
.clock { text-align: right; }
```
